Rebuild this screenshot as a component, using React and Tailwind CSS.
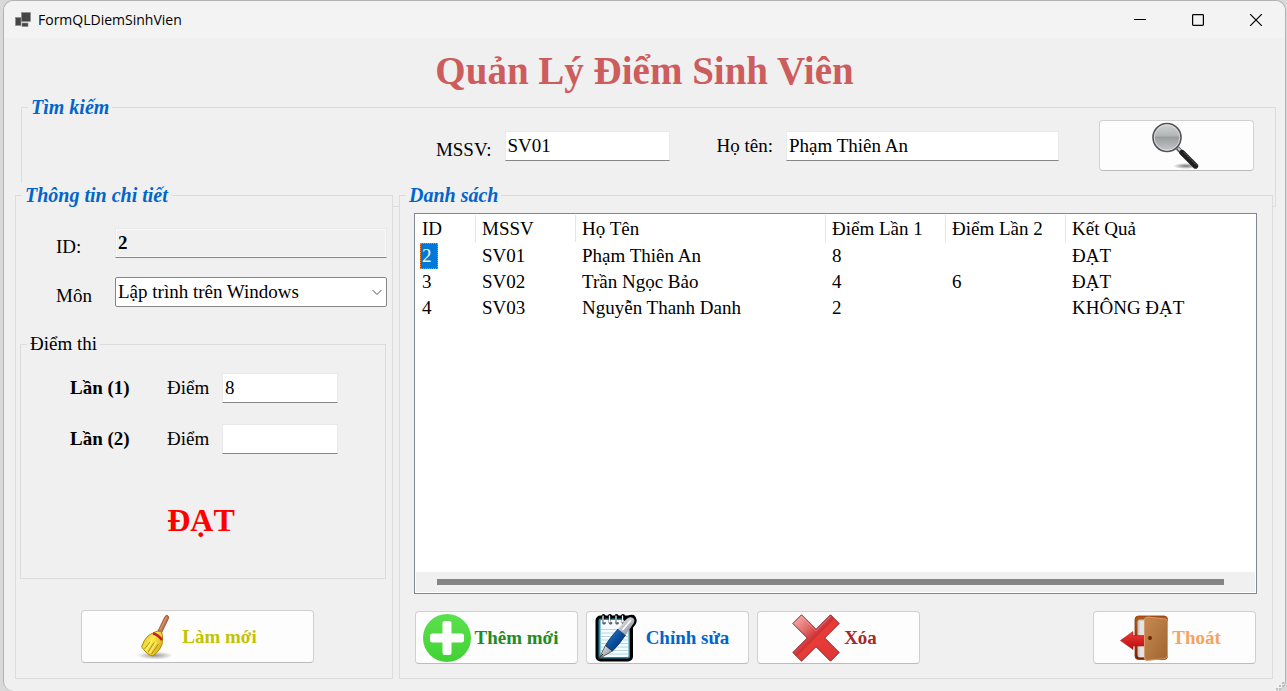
import React from "react";

const serif = "font-['Liberation_Serif','Times_New_Roman',serif]";

function AppIcon() {
  return (
    <svg width="16" height="16" viewBox="0 0 16 16" aria-hidden="true">
      <g fill="#454545" stroke="#8a8a8a" strokeWidth="0.6">
        <rect x="0.5" y="5.5" width="5.5" height="8" />
        <rect x="6.5" y="0.5" width="9" height="9" />
        <rect x="7" y="11" width="6" height="3.5" />
      </g>
    </svg>
  );
}

function SearchIcon() {
  return (
    <svg width="48" height="48" viewBox="0 0 48 48" aria-hidden="true">
      <defs>
        <linearGradient id="lens" x1="0" y1="0" x2="0" y2="1">
          <stop offset="0" stopColor="#d2d4d4" />
          <stop offset="0.42" stopColor="#b4b8b8" />
          <stop offset="0.5" stopColor="#999d9d" />
          <stop offset="1" stopColor="#c6caca" />
        </linearGradient>
        <radialGradient id="lensShadow">
          <stop offset="0" stopColor="#555" stopOpacity="0.8" />
          <stop offset="1" stopColor="#555" stopOpacity="0" />
        </radialGradient>
      </defs>
      <ellipse cx="35" cy="44" rx="13" ry="3" fill="url(#lensShadow)" />
      <path d="M26.500 26 L32 31.500" stroke="#555b66" strokeWidth="4.500" />
      <path d="M27 26 L31.500 30.500" stroke="#c3c9d4" strokeWidth="2" />
      <path d="M31 30.500 L44.500 44" stroke="#202020" strokeWidth="5.400" strokeLinecap="round" />
      <path d="M33 30.500 L46 43.500" stroke="#777" strokeWidth="1" strokeDasharray="1.500 1" />
      <circle cx="16" cy="15.500" r="14" fill="url(#lens)" stroke="#515357" strokeWidth="1.600" />
      <circle cx="16" cy="15.500" r="12.700" fill="none" stroke="#e2e4e4" strokeWidth="0.800" />
    </svg>
  );
}

function BroomIcon() {
  return (
    <svg width="48" height="48" viewBox="-2 1 48 48" aria-hidden="true">
      <defs>
        <radialGradient id="broomShadow">
          <stop offset="0" stopColor="#777" stopOpacity="0.75" />
          <stop offset="1" stopColor="#777" stopOpacity="0" />
        </radialGradient>
        <linearGradient id="bristle" x1="0" y1="0" x2="1" y2="0.700">
          <stop offset="0" stopColor="#d9b912" />
          <stop offset="0.500" stopColor="#fbe94c" />
          <stop offset="1" stopColor="#d8ae0c" />
        </linearGradient>
      </defs>
      <ellipse cx="23" cy="43.500" rx="18" ry="4" fill="url(#broomShadow)" />
      <path d="M26 19 L33 4.500 Q35 2 36.500 4.500 Q37 6 36 7.500 L29.500 21 Z" fill="#c07548" stroke="#8b4d2b" strokeWidth="0.800" />
      <path d="M28 18 L34.500 5" stroke="#dfa47c" strokeWidth="1" />
      <path d="M22 20.500 Q25 18 29.500 20 Q31 23 30.500 28 Q31 36 21 44 Q16 43.500 10 35.500 Q9 34 10.500 33 Q13 24 22 20.500 Z" fill="url(#bristle)" stroke="#ae8709" strokeWidth="1" />
      <path d="M21 21.500 Q26 22.500 30 28" fill="none" stroke="#c9202b" strokeWidth="2.800" />
      <path d="M18 30 L12.500 37 M22 30.500 L16 40 M26.500 32 L19.500 42" stroke="#a8850c" strokeWidth="0.900" fill="none" />
      <path d="M20 29 L14 38 M24.500 30 L18 41" stroke="#fff38a" strokeWidth="1" />
    </svg>
  );
}

function AddIcon() {
  return (
    <svg width="48" height="48" viewBox="0 0 48 48" aria-hidden="true">
      <defs>
        <linearGradient id="addFill" x1="0" y1="0" x2="0" y2="1">
          <stop offset="0" stopColor="#5de04f" />
          <stop offset="1" stopColor="#41d233" />
        </linearGradient>
      </defs>
      <circle cx="24" cy="24" r="24" fill="url(#addFill)" />
      <rect x="19.500" y="7" width="9" height="34" rx="2.500" fill="#fff" />
      <rect x="7" y="19.500" width="34" height="9" rx="2.500" fill="#fff" />
    </svg>
  );
}

function EditIcon() {
  return (
    <svg width="48" height="48" viewBox="0 0 48 48" aria-hidden="true">
      <defs>
        <linearGradient id="penBody" x1="0" y1="0" x2="1" y2="1">
          <stop offset="0" stopColor="#2b87dc" />
          <stop offset="0.500" stopColor="#0b4f9e" />
          <stop offset="1" stopColor="#05264f" />
        </linearGradient>
        <linearGradient id="penMetal" x1="0" y1="0" x2="1" y2="1">
          <stop offset="0" stopColor="#f8f8fa" />
          <stop offset="1" stopColor="#777d87" />
        </linearGradient>
      </defs>
      <rect x="3" y="3" width="34.500" height="43" rx="3.500" fill="#1c8fae" stroke="#000" strokeWidth="3" />
      <rect x="6.500" y="6" width="28" height="37" rx="1" fill="#f5fbfc" />
      <path d="M7 15.500h27M7 19h27M7 22.500h27M7 26h27M7 29.500h27M7 33h27M7 36.500h27M7 40h27" stroke="#b4d8e2" strokeWidth="1" />
      <path d="M9.500 3V2M16 3V2M22.500 3V2M29 3V2" stroke="#000" strokeWidth="4" strokeLinecap="round" />
      <path d="M9 2.500V8.500Q9.500 10.500 11 9M15.500 2.500V8.500Q16 10.500 17.500 9M22 2.500V8.500Q22.500 10.500 24 9M28.500 2.500V8.500Q29 10.500 30.500 9" fill="none" stroke="#5b6166" strokeWidth="1.800" strokeLinecap="round" />
      <path d="M9 2V8M15.500 2V8M22 2V8M28.500 2V8" stroke="#fff" strokeWidth="0.900" strokeLinecap="round" />
      <path d="M30 6 Q35 .8 39.500 2 Q43 4.500 41 9.500 L36 16" fill="#000" stroke="#000" strokeWidth="2" strokeLinejoin="round" />
      <path d="M4.500 45 L11.500 31.500 L18.500 37 Z" fill="url(#penMetal)" stroke="#444" strokeWidth="0.800" />
      <path d="M4.500 45 L9 40" stroke="#222" strokeWidth="1" />
      <path d="M11.500 31.500 Q15 25 24 15 L31.500 21 Q25 31 18.500 37 Z" fill="url(#penBody)" stroke="#0a2c55" strokeWidth="0.800" />
      <path d="M24 15 L32 5.500 Q36 2 39 4 Q41.500 6 39.500 9.500 L31.500 21 Z" fill="url(#penMetal)" />
      <path d="M28.500 16 L37 6" stroke="#fff" strokeWidth="1.600" />
    </svg>
  );
}

function DeleteIcon() {
  return (
    <svg width="48" height="48" viewBox="0 0 48 48" aria-hidden="true">
      <defs>
        <linearGradient id="crossFill" x1="0" y1="0" x2="1" y2="1">
          <stop offset="0" stopColor="#f6bcb8" />
          <stop offset="0.300" stopColor="#e26a68" />
          <stop offset="0.480" stopColor="#cf2f33" />
          <stop offset="0.500" stopColor="#e83c38" />
          <stop offset="1" stopColor="#dd3434" />
        </linearGradient>
      </defs>
      <path d="M9.500 .8 L24 15.300 L38.500 .8 L47.200 9.500 L32.700 24 L47.200 38.500 L38.500 47.200 L24 32.700 L9.500 47.200 L.8 38.500 L15.300 24 L.8 9.500 Z" fill="url(#crossFill)" stroke="#8d2427" strokeWidth="1" />
      <path d="M9.500 2.300 L24 16.800 L38.500 2.300" fill="none" stroke="#fff" strokeOpacity="0.250" />
    </svg>
  );
}

function ExitIcon() {
  return (
    <svg width="48" height="48" viewBox="0 0 48 48" aria-hidden="true">
      <defs>
        <linearGradient id="door" x1="0" y1="0" x2="1" y2="1">
          <stop offset="0" stopColor="#c68a50" />
          <stop offset="1" stopColor="#a06530" />
        </linearGradient>
        <linearGradient id="frame" x1="0" y1="0" x2="0" y2="1">
          <stop offset="0" stopColor="#b65a14" />
          <stop offset="1" stopColor="#7b1f04" />
        </linearGradient>
        <linearGradient id="arrow" x1="0" y1="0" x2="0" y2="1">
          <stop offset="0" stopColor="#f03a3a" />
          <stop offset="1" stopColor="#ba0c0c" />
        </linearGradient>
      </defs>
      <rect x="15" y="2" width="32.500" height="43.500" rx="3.500" fill="url(#frame)" stroke="#84390f" strokeWidth="0.800" />
      <path d="M17.500 8 Q17.500 5.500 20 5.500 H26 V43.500 H20 Q17.500 43.500 17.500 41 Z" fill="#c9c9c9" />
      <path d="M19.500 7 H24 V43 H19.500 Z" fill="#e4e4e4" />
      <path d="M.5 26.500 L13 17.500 V21.500 H25 V32 H13 V35.500 Z" fill="url(#arrow)" stroke="#b51515" strokeWidth="0.600" />
      <path d="M24.500 5 Q25 3 28 3 L45 5 Q47.500 5 47.500 8 V41 Q47.500 44 45 44.500 L27 46.500 Q24.500 46.500 24.500 44 Z" fill="url(#door)" stroke="#d79b68" strokeWidth="1" />
      <circle cx="30" cy="24" r="1.900" fill="#6d1d0b" />
    </svg>
  );
}

function GroupBox({ title, legendClass, className = "", children }) {
  return (
    <fieldset className={`min-w-0 border border-[#dcdcdc] ${className}`}>
      <legend className={`ml-1.5 h-6 px-[3px] leading-6 whitespace-nowrap ${legendClass}`}>{title}</legend>
      {children}
    </fieldset>
  );
}

const headingLegend = "text-xl font-bold italic text-[#0066cc]";

function TextField({ className = "", ...props }) {
  return (
    <input
      type="text"
      className={`h-[30px] min-w-0 border border-[#e9e9e9] border-b-[#868686] px-0.5 outline-none ${className}`}
      {...props}
    />
  );
}

function ActionButton({ icon, label, className }) {
  return (
    <button
      type="button"
      className={`flex h-[53px] items-center justify-center gap-1 rounded border border-[#d0d0d0] border-b-[#bcbcbc] bg-[#fdfdfd] font-bold whitespace-nowrap ${className}`}
    >
      {icon}
      {label}
    </button>
  );
}

const columns = ["ID", "MSSV", "Họ Tên", "Điểm Lần 1", "Điểm Lần 2", "Kết Quả"];

const rows = [
  ["2", "SV01", "Phạm Thiên An", "8", "", "ĐẠT"],
  ["3", "SV02", "Trần Ngọc Bảo", "4", "6", "ĐẠT"],
  ["4", "SV03", "Nguyễn Thanh Danh", "2", "", "KHÔNG ĐẠT"],
];

function StudentTable() {
  return (
    <table className="w-full table-fixed border-collapse text-left">
      <colgroup>
        <col className="w-[60px]" />
        <col className="w-[100px]" />
        <col className="w-[250px]" />
        <col className="w-[120px]" />
        <col className="w-[120px]" />
        <col />
      </colgroup>
      <thead>
        <tr>
          {columns.map((name, i) => (
            <th key={name} className="h-[29px] p-0 font-normal">
              <div
                className={`h-[27px] border-l pl-1.5 leading-[27px] ${i > 0 ? "border-[#e5e5e5]" : "border-transparent"}`}
              >
                {name}
              </div>
            </th>
          ))}
        </tr>
      </thead>
      <tbody>
        {rows.map((row, r) => (
          <tr key={row[0]}>
            {row.map((cell, c) => (
              <td key={c} className="h-[26px] p-0 pl-[5px] leading-[26px] whitespace-nowrap">
                {r === 0 && c === 0 ? (
                  <div className="h-[26px] w-[18px] border border-dotted border-[#ff8728] bg-[#0078d7] pl-px leading-6 text-white">
                    {cell}
                  </div>
                ) : (
                  <div className="pl-0.5">{cell}</div>
                )}
              </td>
            ))}
          </tr>
        ))}
      </tbody>
    </table>
  );
}

function TitleBar() {
  const control = "flex h-full w-[58px] items-center justify-center";
  return (
    <header className="flex h-[37px] items-center rounded-t-[10px] bg-[#f3f3f3] pl-[11px]">
      <AppIcon />
      <span className="pl-[7px] font-['Open_Sans','Noto_Sans',sans-serif] text-sm">FormQLDiemSinhVien</span>
      <div className="ml-auto flex h-full">
        <button type="button" aria-label="Minimize" className={control}>
          <svg width="12" height="12" viewBox="0 0 12 12">
            <path d="M0 5.500H12" stroke="#000" />
          </svg>
        </button>
        <button type="button" aria-label="Maximize" className={control}>
          <svg width="12" height="12" viewBox="0 0 12 12">
            <rect x="0.600" y="0.600" width="10.800" height="10.800" rx="0.800" fill="none" stroke="#000" strokeWidth="1.200" />
          </svg>
        </button>
        <button type="button" aria-label="Close" className={control}>
          <svg width="12" height="12" viewBox="0 0 12 12">
            <path d="M0 0L12 12M12 0L0 12" stroke="#000" strokeWidth="1.200" />
          </svg>
        </button>
      </div>
    </header>
  );
}

function ScoreRow({ id, name, value }) {
  return (
    <div className="grid grid-cols-[97px_55px_116px] items-center">
      <span className="font-bold">{name}</span>
      <label htmlFor={id}>Điểm</label>
      <TextField id={id} defaultValue={value} className="bg-white" />
    </div>
  );
}

export default function App() {
  return (
    <div className={`min-h-screen bg-[#d9d9d9] pr-px pl-[3px] text-[19px] leading-[22px] text-black ${serif}`}>
      <main className="relative flex min-h-screen flex-col rounded-[10px] border border-b-0 border-[#b2b2b2] bg-[#f0f0f0] pb-3">
        <TitleBar />
        <h1 className="pt-2 text-center text-[39px] leading-[49px] font-bold text-[#cd5c5c]">Quản Lý Điểm Sinh Viên</h1>

        <GroupBox title="Tìm kiếm" legendClass={headingLegend} className="mr-[9px] ml-[17px]">
          <div className="flex items-center justify-end pt-px pr-[21px] pb-[35px]">
            <label htmlFor="mssv" className="pt-2 pr-[13px]">
              MSSV:
            </label>
            <TextField id="mssv" defaultValue="SV01" className="w-[165px] bg-white" />
            <label htmlFor="fullname" className="pr-[13px] pl-[47px]">
              Họ tên:
            </label>
            <TextField id="fullname" defaultValue="Phạm Thiên An" className="w-[273px] bg-white" />
            <button
              type="button"
              aria-label="Tìm kiếm"
              className="ml-10 flex h-[51px] w-[155px] items-center justify-center rounded border border-[#d0d0d0] border-b-[#bcbcbc] bg-[#fdfdfd] pr-1"
            >
              <SearchIcon />
            </button>
          </div>
        </GroupBox>

        <div className="relative -mt-6 mr-3 ml-[11px] flex flex-1 gap-1.5">
          <section className="flex w-[378px] shrink-0 bg-[#f0f0f0]">
            <GroupBox title="Thông tin chi tiết" legendClass={headingLegend} className="flex-1">
              <div className="grid grid-cols-[59px_1fr] items-center gap-y-[19px] pt-[21px] pr-[5px] pl-10">
                <label htmlFor="record-id" className="pt-2">
                  ID:
                </label>
                <TextField
                  id="record-id"
                  readOnly
                  value="2"
                  className="bg-[#f0f0f0] font-bold shadow-[inset_0_0_0_1px_#fafafa]"
                />
                <label htmlFor="subject" className="pt-2">
                  Môn
                </label>
                <div className="relative">
                  <select
                    id="subject"
                    className="block h-[30px] w-full appearance-none rounded-xs border border-[#868686] bg-white px-0.5 outline-none"
                  >
                    <option>Lập trình trên Windows</option>
                  </select>
                  <svg
                    className="pointer-events-none absolute top-3 right-[5px]"
                    width="10"
                    height="7"
                    viewBox="0 0 10 7"
                    aria-hidden="true"
                  >
                    <path d="M.5 1L5 5.500L9.500 1" fill="none" stroke="#555" />
                  </svg>
                </div>
              </div>

              <GroupBox title="Điểm thi" legendClass="" className="mt-[25px] mr-1.5 ml-1">
                <div className="flex flex-col gap-[21px] pt-[17px] pl-[49px]">
                  <ScoreRow id="score-1" name="Lần (1)" value="8" />
                  <ScoreRow id="score-2" name="Lần (2)" value="" />
                </div>
                <p className="pt-[46px] pr-1 pb-[38px] text-center text-[32px] leading-10 font-bold text-[#ff0000]">
                  ĐẠT
                </p>
              </GroupBox>

              <div className="flex justify-center pt-[31px] pr-[13px] pb-3.5">
                <ActionButton icon={<BroomIcon />} label="Làm mới" className="w-[233px] pr-2 text-[#c3c300]" />
              </div>
            </GroupBox>
          </section>

          <section className="flex min-w-0 flex-1 bg-[#f0f0f0]">
            <GroupBox title="Danh sách" legendClass={headingLegend} className="flex flex-1 flex-col">
              <div className="mt-1.5 mr-[15px] ml-3.5 flex flex-1 flex-col border border-[#828790] bg-white">
                <div className="flex-1">
                  <StudentTable />
                </div>
                <div className="mx-px mb-px flex h-5 items-center bg-[#f0f0f0] pr-[31px] pl-[21px]">
                  <div className="h-1.5 w-full bg-[#858585]" />
                </div>
              </div>
              <div className="flex gap-2 pt-[17px] pr-4 pb-3.5 pl-[15px]">
                <ActionButton icon={<AddIcon />} label="Thêm mới" className="w-[163px] pr-3 text-[#228b22]" />
                <ActionButton icon={<EditIcon />} label="Chỉnh sửa" className="w-[163px] pr-3 text-[#0066cc]" />
                <ActionButton icon={<DeleteIcon />} label="Xóa" className="w-[163px] pr-2 text-[#a52a2a]" />
                <ActionButton icon={<ExitIcon />} label="Thoát" className="ml-auto w-[163px] pr-2 text-[#f4a460]" />
              </div>
            </GroupBox>
          </section>
        </div>

        <svg className="absolute right-0 bottom-0" width="10" height="10" viewBox="0 0 10 10" aria-hidden="true">
          <path d="M7 1h2v2h-2zM4 4h2v2h-2zM7 4h2v2h-2zM1 7h2v2h-2zM4 7h2v2h-2z" fill="#bdbdbd" />
        </svg>
      </main>
    </div>
  );
}
